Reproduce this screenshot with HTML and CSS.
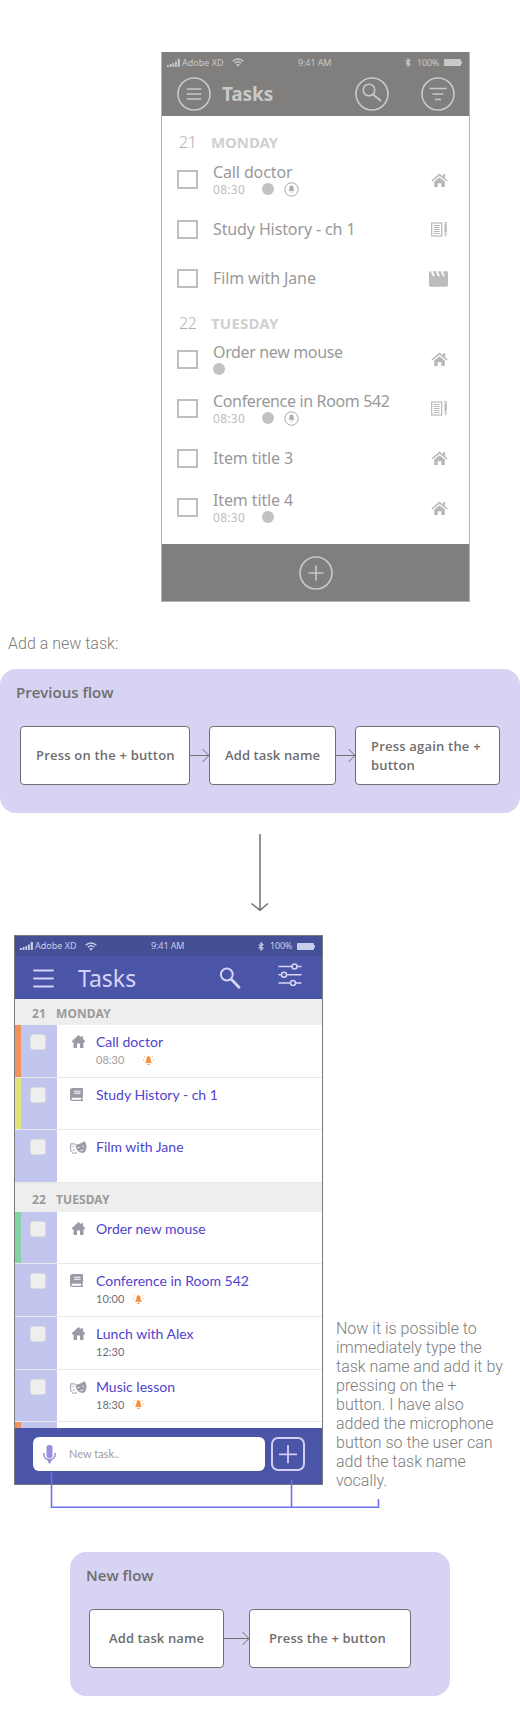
FILE: index.html
```
<!DOCTYPE html>
<html lang="en">
<head>
<meta charset="utf-8">
<title>Tasks – add a new task flow</title>
<link rel="stylesheet" href="styles.css">
</head>
<body>
<svg class="sprite" aria-hidden="true">
  <symbol id="signal" viewBox="0 0 13 8"><path fill="currentColor" d="M0 6h1.800v2H0zM2.700 5h1.800v3H2.700zM5.400 4h1.800v4H5.400zM8 2.500H9.800V8H8zM10.700 0h2.200v8h-2.200z"/></symbol>
  <symbol id="wifi" viewBox="0 0 12 9"><g fill="none" stroke="currentColor" stroke-width="1.400"><path d="M.7 3.300C3.700.2 8.300.2 11.300 3.300M2.800 5.300c1.900-1.800 4.500-1.800 6.400 0"/></g><path fill="currentColor" d="M4.200 6.800c1-1 2.600-1 3.600 0L6 8.700z"/></symbol>
  <symbol id="bluetooth" viewBox="0 0 6 9"><path fill="none" stroke="currentColor" stroke-width="1.100" d="M.7 2.500 5 6.300 3 8.200V.8L5 2.700.7 6.500"/></symbol>
  <symbol id="battery" viewBox="0 0 18 7"><rect width="17" height="7" rx=".8" fill="currentColor"/><path fill="currentColor" d="M17 2.300h1v2.400h-1z"/></symbol>
  <symbol id="menu-round" viewBox="0 0 34 34"><g fill="none" stroke="currentColor" stroke-width="1.600"><circle cx="17" cy="17" r="16"/><path d="M9.700 12h14.600M9.700 17h14.600M9.700 22h14.600"/></g></symbol>
  <symbol id="search-round" viewBox="0 0 34 34"><g fill="none" stroke="currentColor" stroke-width="1.600"><circle cx="17" cy="17" r="16"/><circle cx="14" cy="13" r="5.800"/><path stroke-width="2" d="m18 17.500 8 6.500"/></g></symbol>
  <symbol id="filter-round" viewBox="0 0 34 34"><g fill="none" stroke="currentColor" stroke-width="1.600"><circle cx="17" cy="17" r="16"/><path d="M8.500 11.500h17M11.500 17h11M14 22.500h6"/></g></symbol>
  <symbol id="plus-round" viewBox="0 0 34 34"><g fill="none" stroke="currentColor" stroke-width="1.600"><circle cx="17" cy="17" r="16"/><path d="M9.500 17h15M17 9.500v15"/></g></symbol>
  <symbol id="bell-round" viewBox="0 0 15 15"><circle cx="7.500" cy="7.500" r="6.700" fill="none" stroke="currentColor" stroke-width="1"/><path fill="currentColor" d="M7.500 3.400c1.600 0 2 1.300 2 2.700 0 1.500.6 2 1.200 2.700H4.300c.6-.7 1.200-1.200 1.200-2.700 0-1.400.4-2.700 2-2.700zM6.500 9.500h2a1 1 0 0 1-2 0z"/></symbol>
  <symbol id="house" viewBox="0 0 17 14"><path fill="none" stroke="currentColor" stroke-width="1.500" d="M.8 8 8.500 1.600 16.200 8"/><path fill="currentColor" d="M12 1.200h2.200v4L12 3.400zM8.500 4.200l5.300 4.300V14h-3.500v-3.800H6.700V14H3.200V8.500z"/></symbol>
  <symbol id="notebook" viewBox="0 0 17 15"><rect x=".7" y="1" width="10" height="13" fill="none" stroke="currentColor" stroke-width="1.200"/><path stroke="currentColor" d="M2.800 3.500h5.800M2.800 5.500h5.800M2.800 7.500h5.800M2.800 9.500h5.800M2.800 11.500h5.800"/><path fill="currentColor" d="M13.500 0h2.300v1.500h-2.300zM13.500 2.300h2.300v8.200h-2.300zM13.500 11.200h2.300L14.700 15z"/></symbol>
  <symbol id="clapper" viewBox="0 0 19 16"><path fill="currentColor" d="M1.500 0 4 5.200H6L3.700.3h3L9 5.200h2L8.700.3h3L14 5.200h2L13.600.3H18q1 0 1 1V14q0 1.700-1.700 1.700H1.700Q0 15.700 0 14V1.500Q0 .3 1.500 0z"/></symbol>
  <symbol id="menu" viewBox="0 0 21 19"><path fill="none" stroke="currentColor" stroke-width="1.800" stroke-linecap="round" d="M1 1.500h19M1 9.500h19M1 17.500h19"/></symbol>
  <symbol id="search" viewBox="0 0 22 22"><circle cx="7.800" cy="7.500" r="5.900" fill="none" stroke="currentColor" stroke-width="2"/><path stroke="currentColor" stroke-width="2.800" stroke-linecap="round" d="m12.500 12.500 7.500 7.700"/></symbol>
  <symbol id="sliders" viewBox="0 0 24 24"><g fill="none" stroke="currentColor" stroke-width="1.500" stroke-linecap="round"><path d="M1 3.500h12.700M19.300 3.500H23M1 11.700h2.200M8.800 11.700H23M1 20h11.200M17.800 20H23"/><circle cx="16.500" cy="3.500" r="2.500"/><circle cx="6" cy="11.700" r="2.500"/><circle cx="15" cy="20" r="2.500"/></g></symbol>
  <symbol id="home" viewBox="0 0 13 13"><path fill="currentColor" d="M6.500 0 9 2.200V1.200h2V4L13 6v1.200h-1.500V13H8V8.500H5V13H1.500V7.200H0V6z"/></symbol>
  <symbol id="book" viewBox="0 0 13 13"><path fill="currentColor" fill-rule="evenodd" d="M2.500 0h9.700q.8 0 .8.800v8q0 .7-.6.8v2.200h.6V13H2.500Q0 13 0 10.500v-8Q0 0 2.500 0zM4 2.800v1h6.500v-1zM4 4.800v1h6.500v-1zM2.500 9.700q-1 0-1 1t1 1H11v-2z"/></symbol>
  <symbol id="masks" viewBox="0 0 17 14"><path fill="none" stroke="currentColor" d="M5.500 3 .7 2.800v6c.3 2.300 2.200 4 4.300 3.500 1 0 1.600-.5 2-1M2.500 5.500h1.200M2.800 9.500c.6-.8 1.300-1 2-.8"/><path fill="currentColor" fill-rule="evenodd" d="M5.600 3.500C9 3.400 12 2 14.500.3c1.800 2.400 2.400 5 1.700 8-.7 2.800-2.600 4-4.700 3.500-3.700-.7-5.800-4.300-5.900-8.300zm2 2.200.4 1.700 1.900-1zm4.900-1.200.2 1.700 1.700-1.200zM9 9c1.800 1.800 4.200 1 5-.9-1.500 1-3.200 1.300-5 .9z"/></symbol>
  <symbol id="alarm" viewBox="0 0 11 11"><path fill="currentColor" d="M5.500 1.300c1.500 0 1.900 1.400 2 3.100.1 1.600.8 2.300 1.700 3.300H1.800c.9-1 1.600-1.700 1.700-3.300.1-1.700.5-3.100 2-3.100zM4.200 8.700h2.600a1.300 1.300 0 0 1-2.600 0z"/><path stroke="currentColor" stroke-width=".8" d="M1 4.800H0M10 4.800h1M2 2.300l-1-.8M9 2.300l1-.8"/></symbol>
  <symbol id="mic" viewBox="0 0 13 19"><rect x="3.500" width="6" height="13" rx="2.500" fill="currentColor"/><path fill="none" stroke="currentColor" stroke-width="1.500" d="M.8 8v1.500c0 3 2.500 5 5.700 5s5.700-2 5.700-5V8"/><path fill="currentColor" d="M4 14.500h5L7.200 18.500H5.800z"/></symbol>
  <symbol id="plus-box" viewBox="0 0 34 34"><rect x="1" y="1" width="32" height="32" rx="6" fill="none" stroke="currentColor" stroke-width="2"/><path stroke="currentColor" stroke-width="1.800" d="M8 17.300h18M17 8.300v18"/></symbol>
  <symbol id="next" viewBox="0 0 19 16"><path fill="none" stroke="#707070" d="M0 7.500h19M12.500 1 19 7.500 12.500 14"/></symbol>
  <symbol id="next-wide" viewBox="0 0 25 16"><path fill="none" stroke="#707070" d="M0 7.500h25M18.500 1 25 7.500 18.500 14"/></symbol>
</svg>

<main class="page">
  <section class="old-phone">
    <header class="old-head">
      <div class="status">
        <svg class="signal"><use href="#signal"/></svg><span class="carrier">Adobe XD</span><svg class="wifi"><use href="#wifi"/></svg>
        <span class="clock">9:41 AM</span>
        <svg class="bluetooth"><use href="#bluetooth"/></svg><span class="percent">100%</span><svg class="battery"><use href="#battery"/></svg>
      </div>
      <div class="old-bar">
        <svg class="round"><use href="#menu-round"/></svg>
        <h1>Tasks</h1>
        <svg class="round"><use href="#search-round"/></svg>
        <svg class="round"><use href="#filter-round"/></svg>
      </div>
    </header>
    <div class="old-list">
      <h2 class="old-day"><span>21</span>MONDAY</h2>
      <div class="old-row"><i class="box"></i><div class="old-text"><p>Call doctor</p><div class="meta"><time>08:30</time><i class="dot"></i><svg class="bell"><use href="#bell-round"/></svg></div></div><svg class="house"><use href="#house"/></svg></div>
      <div class="old-row"><i class="box"></i><div class="old-text"><p>Study History - ch 1</p></div><svg class="notebook"><use href="#notebook"/></svg></div>
      <div class="old-row"><i class="box"></i><div class="old-text"><p>Film with Jane</p></div><svg class="clapper"><use href="#clapper"/></svg></div>
      <h2 class="old-day later"><span>22</span>TUESDAY</h2>
      <div class="old-row"><i class="box"></i><div class="old-text"><p class="tight">Order new mouse</p><div class="meta"><i class="dot"></i></div></div><svg class="house"><use href="#house"/></svg></div>
      <div class="old-row"><i class="box"></i><div class="old-text"><p class="tight">Conference in Room 542</p><div class="meta"><time>08:30</time><i class="dot"></i><svg class="bell"><use href="#bell-round"/></svg></div></div><svg class="notebook"><use href="#notebook"/></svg></div>
      <div class="old-row"><i class="box"></i><div class="old-text"><p>Item title 3</p></div><svg class="house"><use href="#house"/></svg></div>
      <div class="old-row"><i class="box"></i><div class="old-text"><p>Item title 4</p><div class="meta"><time>08:30</time><i class="dot"></i></div></div><svg class="house"><use href="#house"/></svg></div>
    </div>
    <footer class="old-foot"><svg class="round"><use href="#plus-round"/></svg></footer>
  </section>

  <p class="lead">Add a new task:</p>

  <section class="panel">
    <h3>Previous flow</h3>
    <div class="steps">
      <div class="step first">Press on the + button</div>
      <svg class="next"><use href="#next"/></svg>
      <div class="step second">Add task name</div>
      <svg class="next"><use href="#next"/></svg>
      <div class="step third">Press again the +<br>button</div>
    </div>
  </section>

  <svg class="down" viewBox="0 0 20 78"><path fill="none" stroke="#707070" stroke-width="1.500" d="M10 0v76M1.500 69.500 10 76.300l8-6.800"/></svg>

  <div class="redesign">
    <section class="phone">
      <div class="status">
        <svg class="signal"><use href="#signal"/></svg><span class="carrier">Adobe XD</span><svg class="wifi"><use href="#wifi"/></svg>
        <span class="clock">9:41 AM</span>
        <svg class="bluetooth"><use href="#bluetooth"/></svg><span class="percent">100%</span><svg class="battery"><use href="#battery"/></svg>
      </div>
      <header class="bar">
        <svg class="menu"><use href="#menu"/></svg>
        <h1>Tasks</h1>
        <svg class="search"><use href="#search"/></svg>
        <svg class="sliders"><use href="#sliders"/></svg>
      </header>
      <div class="list">
        <h2 class="day"><span>21</span>MONDAY</h2>
        <div class="row orange"><div class="check"><i></i></div><svg class="home"><use href="#home"/></svg><div class="text"><p>Call doctor</p><div class="when light"><time>08:30</time><svg class="alarm far"><use href="#alarm"/></svg></div></div></div>
        <div class="row yellow"><div class="check"><i></i></div><svg class="book"><use href="#book"/></svg><div class="text"><p>Study History - ch 1</p></div></div>
        <div class="row"><div class="check"><i></i></div><svg class="masks"><use href="#masks"/></svg><div class="text"><p>Film with Jane</p></div></div>
        <h2 class="day tall"><span>22</span>TUESDAY</h2>
        <div class="row green"><div class="check"><i></i></div><svg class="home"><use href="#home"/></svg><div class="text"><p>Order new mouse</p></div></div>
        <div class="row"><div class="check"><i></i></div><svg class="book"><use href="#book"/></svg><div class="text"><p>Conference in Room 542</p><div class="when"><time>10:00</time><svg class="alarm"><use href="#alarm"/></svg></div></div></div>
        <div class="row"><div class="check"><i></i></div><svg class="home"><use href="#home"/></svg><div class="text"><p>Lunch with Alex</p><div class="when"><time>12:30</time></div></div></div>
        <div class="row"><div class="check"><i></i></div><svg class="masks"><use href="#masks"/></svg><div class="text"><p>Music lesson</p><div class="when"><time>18:30</time><svg class="alarm"><use href="#alarm"/></svg></div></div></div>
        <div class="row orange"><div class="check"></div></div>
      </div>
      <footer class="foot">
        <div class="field"><svg class="mic"><use href="#mic"/></svg><span>New task..</span></div>
        <svg class="plus"><use href="#plus-box"/></svg>
      </footer>
    </section>
    <p class="note">Now it is possible to<br>immediately type the<br>task name and add it by<br>pressing on the +<br>button. I have also<br>added the microphone<br>button so the user can<br>add the task name<br>vocally.</p>
    <svg class="link" viewBox="0 0 330 38"><path fill="none" stroke="#6a72ec" stroke-width="1.600" d="M1.500 0v35.300h327V27M241.500 8v27"/></svg>
  </div>

  <section class="panel new">
    <h3>New flow</h3>
    <div class="steps">
      <div class="step fourth">Add task name</div>
      <svg class="next wide"><use href="#next-wide"/></svg>
      <div class="step fifth">Press the + button</div>
    </div>
  </section>
</main>
</body>
</html>
```
FILE: styles.css
```
* { box-sizing: border-box; }
body { margin: 0; background: #fff; font-family: "Noto Sans", "Open Sans", sans-serif; }
h1, h2, h3, p { margin: 0; font-weight: 400; }
svg { display: block; flex: none; }
i { display: block; flex: none; }
.sprite { position: absolute; width: 0; height: 0; }
.page { width: 520px; height: 1728px; overflow: hidden; padding-top: 52px; }

/* Status bar shared by both phones */
.status { display: flex; align-items: center; height: 21px; padding: 0 7px 0 5px; font-size: 9px; line-height: 12px; white-space: nowrap; }
.signal { width: 13px; height: 8px; margin-right: 2px; }
.carrier { width: 42px; }
.wifi { width: 12px; height: 9px; margin-left: 8px; }
.clock { margin-left: 54px; width: 34px; letter-spacing: -.1px; }
.bluetooth { width: 6px; height: 9px; margin-left: auto; margin-right: 6px; }
.percent { width: 23px; margin-right: 4px; letter-spacing: -.2px; }
.battery { width: 18px; height: 7px; }

/* Original design */
.old-phone { width: 309px; height: 550px; margin-left: 161px; border: 1px solid #b3b3b3; border-top: 0; display: flex; flex-direction: column; }
.old-head { height: 64px; background: #807f7e; color: #c9c9c9; }
.old-bar { display: flex; align-items: center; height: 41px; padding-left: 15px; }
.round { width: 34px; height: 34px; }
.old-bar h1 { width: 144px; padding-left: 11px; font-size: 19px; line-height: 26px; font-weight: 700; letter-spacing: -.1px; }
.old-bar .round:last-child { margin-left: 32px; }
.old-list { flex: 1; padding-top: 12px; }
.old-day { display: flex; align-items: center; height: 27px; padding-left: 49px; font-size: 15px; line-height: 20px; font-weight: 700; color: #d0d0d0; letter-spacing: -.1px; }
.old-day span { width: 32px; margin-left: -32px; font-size: 16px; font-weight: 300; color: #b0b0b0; letter-spacing: -.5px; }
.old-row { display: flex; align-items: center; height: 49.500px; padding: 0 21px 0 15px; }
.old-day.later { margin-top: 6px; letter-spacing: .2px; }
.old-day.later + .old-row { margin-top: -2px; }
.box { width: 21px; height: 19px; border: 2px solid #bfbfbf; }
.old-text { flex: 1; padding-left: 15px; color: #999; }
.old-text p { font-size: 16px; line-height: 19px; letter-spacing: -.12px; }
.old-text .tight { letter-spacing: -.35px; }
.meta { display: flex; align-items: center; height: 14px; }
.meta time { width: 49px; font-size: 12px; line-height: 13px; color: #bdbdbd; letter-spacing: .3px; }
.dot { width: 12px; height: 12px; border-radius: 50%; background: #c2c2c2; }
.bell { width: 15px; height: 15px; margin-left: 10px; color: #aaa; }
.house { width: 17px; height: 14px; color: #b8b8b8; }
.notebook { width: 17px; height: 15px; color: #b8b8b8; }
.clapper { width: 19px; height: 16px; color: #bcbcbc; }
.old-foot { display: flex; align-items: center; justify-content: center; height: 57px; background: #807f7e; color: #c9c9c9; }

/* Flow diagrams */
.lead { margin-top: 32px; height: 35px; padding-left: 8px; font: 300 16px/19px Roboto, sans-serif; color: #7c7c7c; }
.panel { width: 520px; height: 144px; border-radius: 16px; padding: 11px 16px; background: #d6d3f3; color: #6e6e6e; }
.panel h3 { font: 600 15px/24px "Open Sans", sans-serif; }
.steps { display: flex; align-items: center; margin: 22px 0 0 4px; }
.step { display: flex; align-items: center; height: 59px; border: 1px solid #707070; border-radius: 4px; background: #fff; font: 600 13px/19px "Open Sans", sans-serif; letter-spacing: .1px; white-space: nowrap; }
.first { width: 170px; padding-left: 15px; letter-spacing: .2px; }
.second { width: 127px; padding-left: 15px; }
.third { width: 145px; padding-left: 15px; letter-spacing: .2px; }
.next { width: 19px; height: 16px; }
.next.wide { width: 25px; }
.down { width: 20px; height: 78px; margin: 21px 0 0 250px; }

/* Redesigned screen */
.redesign { position: relative; display: flex; height: 573px; margin-top: 23px; }
.phone { width: 309px; height: 550px; margin-left: 14px; border: 1px solid #777a80; display: flex; flex-direction: column; }
.phone .status { height: 20px; background: #454f95; color: #c9cdec; }
.bar { display: flex; align-items: center; height: 43px; padding-left: 18px; background: #4a55a7; color: #d6d4f6; }
.menu { width: 21px; height: 19px; margin-top: 1px; }
.bar h1 { width: 165px; padding-left: 24px; font-size: 23px; line-height: 30px; }
.search { width: 22px; height: 22px; }
.sliders { width: 24px; height: 24px; margin: -5px 0 0 37px; }
.list { flex: 1; min-height: 0; overflow: hidden; }
.day { display: flex; align-items: center; height: 26px; padding: 3px 0 0 17px; background: #eee; color: #9b9b9b; font-size: 12px; line-height: 16px; font-weight: 700; letter-spacing: .1px; }
.day span { width: 24px; }
.day.tall { height: 29px; padding-top: 6px; }
.row { display: flex; height: 52.600px; border-bottom: 1px solid #e8e8ec; }
.row .check { width: 42px; background: #c2c5ed; padding: 9px 0 0 15px; }
.check i { width: 16px; height: 16px; border: 1px solid #dcdcdf; border-radius: 3px; background: #eee; }
.row.orange .check { border-left: 6px solid #f0935c; padding-left: 9px; }
.row.yellow .check { border-left: 6px solid #e2e27c; padding-left: 9px; }
.row.green .check { border-left: 6px solid #84d3a4; padding-left: 9px; }
.home, .book { width: 13px; height: 13px; margin: 10px 12px 0 13px; color: #9a9ba6; }
.home { margin-left: 15px; margin-right: 11px; }
.book { margin-right: 13px; }
.masks { width: 17px; height: 14px; margin: 11px 9px 0 13px; color: #9a9ba6; }
.text { font-family: Lato, "Noto Sans", sans-serif; padding-top: 7px; }
.text p { font-size: 14px; line-height: 19px; color: #4f44cd; }
.when { display: flex; align-items: center; height: 16px; margin-top: 1px; color: #6d6e78; }
.when.light { color: #a0a0a0; }
.when time { font-size: 11px; line-height: 14px; width: 37px; }
.alarm { width: 11px; height: 11px; color: #f98b35; }
.alarm.far { margin-left: 10px; }
.foot { display: flex; height: 56px; padding: 9px 0 0 18px; background: #4a55a7; }
.field { display: flex; align-items: center; width: 232px; height: 34px; border-radius: 6px; background: #fff; padding-left: 10px; color: #9d9d9d; font: 11px/14px Lato, sans-serif; }
.mic { width: 13px; height: 19px; margin-right: 13px; color: #9b8ddb; }
.plus { width: 34px; height: 34px; margin-left: 6px; color: #d3d0f5; }
.note { margin: 384px 0 0 13px; font: 300 16px/19px Roboto, sans-serif; color: #7c7c7c; white-space: nowrap; }
/* Connector drawn over the footer, tying the mic and plus controls to the note */
.link { position: absolute; left: 50px; top: 537px; width: 330px; height: 38px; }

.panel.new { width: 380px; margin: 44px 0 0 70px; }
.new .steps { margin-left: 3px; }
.fourth { width: 135px; padding-left: 19px; }
.fifth { width: 162px; padding-left: 19px; }
```
